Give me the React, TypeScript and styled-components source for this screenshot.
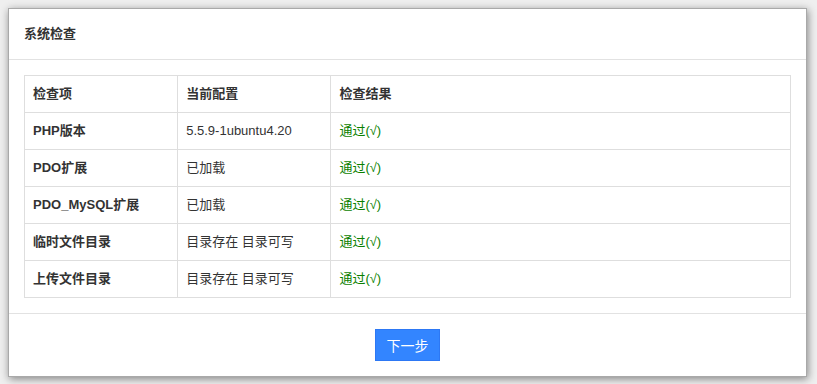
import React from "react"
import styled, { createGlobalStyle } from "styled-components"

const GlobalStyle = createGlobalStyle`
  html, body {
    margin: 0;
    background: #efefef;
    font-family: "Liberation Sans", "Noto Sans CJK SC", Arial, sans-serif;
    font-size: 13px;
    color: #333;
  }
`

const Page = styled.div`
  padding: 8px 10px 8px 8px;
`

const Panel = styled.div`
  background: #fff;
  border: 1px solid #a9a9a9;
  box-shadow: 1px 2px 8px rgba(0, 0, 0, 0.45);
`

const Header = styled.div`
  padding: 15px 15px;
  line-height: 20px;
  font-weight: bold;
  font-size: 13px;
  color: #333;
  border-bottom: 1px solid #e2e2e2;
`

const Body = styled.div`
  padding: 15px;
  border-bottom: 1px solid #e2e2e2;
`

const Table = styled.table`
  width: 100%;
  border-collapse: collapse;
  table-layout: fixed;
  border: 1px solid #dedede;
`

const Cell = styled.td<{ $bold?: boolean; $ok?: boolean }>`
  border: 1px solid #dedede;
  padding: 8px 8px;
  line-height: 20px;
  text-align: left;
  font-weight: ${(p) => (p.$bold ? "bold" : "normal")};
  color: ${(p) => (p.$ok ? "#0b7f00" : "#333")};
`

const HeadCell = styled.th<{ $w?: string }>`
  box-sizing: border-box;
  border: 1px solid #dedede;
  padding: 8px 8px;
  line-height: 20px;
  text-align: left;
  font-weight: bold;
  width: ${(p) => p.$w || "auto"};
`

const Footer = styled.div`
  display: flex;
  justify-content: center;
  padding: 15px;
`

const NextButton = styled.button`
  height: 32px;
  width: 65px;
  background: #3385ff;
  border: 1px solid #2d78f4;
  color: #fff;
  font-family: "Noto Sans CJK SC", sans-serif;
  font-size: 14px;
  cursor: pointer;
`

const rows = [
  { name: "PHP版本", value: "5.5.9-1ubuntu4.20" },
  { name: "PDO扩展", value: "已加载" },
  { name: "PDO_MySQL扩展", value: "已加载" },
  { name: "临时文件目录", value: "目录存在 目录可写" },
  { name: "上传文件目录", value: "目录存在 目录可写" },
]

export default function App() {
  return (
    <Page>
      <GlobalStyle />
      <Panel>
        <Header>系统检查</Header>
        <Body>
          <Table>
            <thead>
              <tr>
                <HeadCell $w="20%">检查项</HeadCell>
                <HeadCell $w="20%">当前配置</HeadCell>
                <HeadCell>检查结果</HeadCell>
              </tr>
            </thead>
            <tbody>
              {rows.map((r) => (
                <tr key={r.name}>
                  <Cell $bold>{r.name}</Cell>
                  <Cell>{r.value}</Cell>
                  <Cell $ok>通过(√)</Cell>
                </tr>
              ))}
            </tbody>
          </Table>
        </Body>
        <Footer>
          <NextButton>下一步</NextButton>
        </Footer>
      </Panel>
    </Page>
  )
}
